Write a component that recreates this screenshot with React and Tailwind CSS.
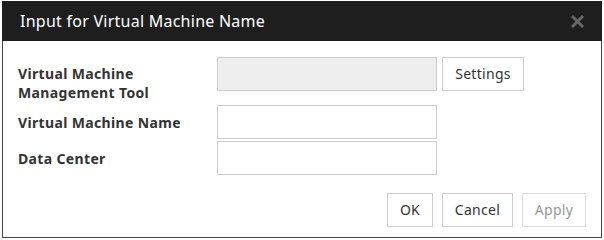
import React from 'react';

function Button({ children, disabled, className = '' }) {
  return (
    <button
      type="button"
      disabled={disabled}
      className={`h-[34px] border bg-white text-[14px] leading-none tracking-[0.3px] ${
        disabled ? 'border-[#dddddd] text-[#999999]' : 'border-[#cccccc] text-[#333333]'
      } ${className}`}
    >
      {children}
    </button>
  );
}

function Field({ readOnly }) {
  return (
    <input
      type="text"
      readOnly={readOnly}
      className={`h-[34px] w-[220px] border border-[#cccccc] outline-none ${
        readOnly ? 'bg-[#eeeeee]' : 'bg-white'
      }`}
    />
  );
}

export default function App() {
  return (
    <div className="h-[240px] w-[604px] bg-white pl-[2px] pt-[1px] font-['Noto_Sans','DejaVu_Sans',sans-serif]">
      <div className="flex h-[237px] w-[600px] flex-col border-x border-b border-[#444444]">
        {/* title bar */}
        <div className="-mx-px flex h-[40px] items-center justify-between bg-[#1e1e1e] pl-[18px] pr-[18px]">
          <h1 className="text-[16px] tracking-[0.25px] text-white">Input for Virtual Machine Name</h1>
          <svg width="13" height="13" viewBox="0 0 13 13" className="mt-px">
            <path d="M2 2L11 11M11 2L2 11" stroke="#666666" strokeWidth="3" strokeLinecap="square" />
          </svg>
        </div>

        {/* form */}
        <div className="flex flex-col pl-[15px] pt-[16px] text-[14px] font-bold tracking-[0.35px] text-[#333333]">
          <div className="mb-[3px] flex items-start">
            <label className="w-[199px] pt-[7px] leading-[19px]">
              Virtual Machine
              <br />
              Management Tool
            </label>
            <Field readOnly />
            <Button className="ml-[5px] w-[82px] font-normal">Settings</Button>
          </div>
          <div className="mb-[2px] flex items-center">
            <label className="w-[199px]">Virtual Machine Name</label>
            <Field />
          </div>
          <div className="flex items-center">
            <label className="w-[199px]">Data Center</label>
            <Field />
          </div>
        </div>

        {/* footer buttons */}
        <div className="mt-[18px] flex justify-end gap-[9px] pr-[15px]">
          <Button className="w-[46px]">OK</Button>
          <Button className="w-[71px]">Cancel</Button>
          <Button disabled className="w-[64px]">Apply</Button>
        </div>
      </div>
    </div>
  );
}
